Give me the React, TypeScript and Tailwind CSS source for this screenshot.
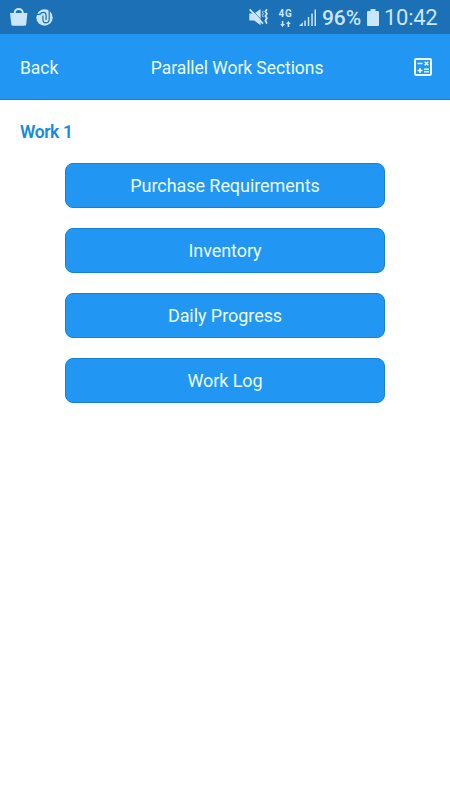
import React from 'react';

const sections = ['Purchase Requirements', 'Inventory', 'Daily Progress', 'Work Log'];

const BagIcon: React.FC = () => (
  <svg className="w-[18px] h-[19px]" viewBox="0 0 18 19" fill="none">
    <path d="M0 5h17.4l-1.2 11.4a1.7 1.7 0 0 1-1.7 1.4H3a1.7 1.7 0 0 1-1.7-1.4z" fill="currentColor" />
    <path d="M4.7 5.6V4.5a4 3.5 0 0 1 8 0v1.1" stroke="currentColor" strokeWidth="2" />
  </svg>
);

const SwirlIcon: React.FC = () => (
  <svg className="w-[17px] h-[17px]" viewBox="0 0 17 17" fill="none">
    <circle cx="8.5" cy="8.5" r="8.2" fill="currentColor" />
    <path d="M1 5.4h3C4.8 4 6 3.4 7.2 3.4c1.8 0 2.9 1.2 2.9 3V11" stroke="#1b70b6" strokeWidth="1.2" />
    <path d="M13.2 1.5V10c0 2.4-1.3 3.8-3.2 3.8S6.9 12.6 6.9 10.700V6.500" stroke="#1b70b6" strokeWidth="1.2" />
  </svg>
);

const MuteVibrateIcon: React.FC = () => (
  <svg className="w-5 h-[18px]" viewBox="0 0 20 18" fill="none">
    <path d="M0.3 5.4h4.9l6.4-4.4v16.2l-6.4-4.7H0.3z" fill="currentColor" />
    <path d="M3.6 2.6 13.6 13.2" stroke="#1b70b6" strokeWidth="0.8" />
    <path d="M0.7 1.4 14 15.6" stroke="currentColor" strokeWidth="1.8" />
    <path d="M14.2 2.8l-.8 1.4 1 1.6-1.1 1.7 1 1.6" stroke="currentColor" strokeWidth="1" />
    <path d="M17.9 1.2l-1.5 2.2 1.5 2.3-1.5 2.3 1.5 2.3-1.5 2.3 1.5 3" stroke="currentColor" strokeWidth="1.8" />
  </svg>
);

const DataArrowsIcon: React.FC = () => (
  <svg className="w-[11px] h-[6px]" viewBox="0 0 11 6" fill="currentColor">
    <path d="M1.8 0h1.6v3H5L2.6 6 .2 3h1.6zM7.6 6h1.6V3h1.6L8.4 0 6 3h1.6z" />
  </svg>
);

const SignalIcon: React.FC = () => (
  <svg className="w-[18px] h-[17px]" viewBox="0 0 18 17" fill="currentColor">
    <path d="M0 17l3.8-3.8V17zM5.3 11.5h1.5V17H5.3zM8.8 8h1.5v9H8.8zM12.3 4.5h1.5V17h-1.5zM15.5 .5H17V17h-1.5z" />
  </svg>
);

const BatteryIcon: React.FC = () => (
  <svg className="w-3 h-[17px]" viewBox="0 0 12 17" fill="currentColor">
    <path d="M3.5 0h5v2H11a1 1 0 0 1 1 1v13a1 1 0 0 1-1 1H1a1 1 0 0 1-1-1V3a1 1 0 0 1 1-1h2.5z" />
  </svg>
);

const CalculatorIcon: React.FC = () => (
  <svg className="w-[18px] h-[18px]" viewBox="0 0 18 18" fill="none" stroke="#f0feff">
    <rect x="1" y="1" width="16" height="16" rx="1.2" strokeWidth="2" />
    <path d="M3.5 5.5h5M3.5 12.5h5M6 10v5M10 11.3h5M10 13.8h5" strokeWidth="1.5" />
    <path d="M10.7 3.7l3.6 3.6M14.3 3.7l-3.6 3.6" strokeWidth="1.5" />
  </svg>
);

const StatusBar: React.FC = () => (
  <div className="flex h-[34px] items-center bg-[#1b70b6] pl-[10px] pr-[11px] text-[#c9e6fb]">
    <BagIcon />
    <div className="ml-2"><SwirlIcon /></div>
    <div className="ml-auto"><MuteVibrateIcon /></div>
    <div className="ml-[9px] flex w-[15px] flex-col items-center gap-[3px] pt-px">
      <span className="text-[10px] font-bold leading-[9px] tracking-[0.8px]">4G</span>
      <DataArrowsIcon />
    </div>
    <div className="ml-[6px]"><SignalIcon /></div>
    <span className="ml-[5px] w-[41px] whitespace-nowrap pt-px text-[21px] font-medium leading-6 tracking-[-0.1px]">96%</span>
    <div className="ml-1"><BatteryIcon /></div>
    <span className="ml-[5px] w-[55px] whitespace-nowrap pt-[2px] text-[22px] leading-6 tracking-[-0.3px]">10:42</span>
  </div>
);

const App: React.FC = () => {
  return (
    <div className="min-h-screen bg-white font-['Roboto',sans-serif]">
      <StatusBar />

      <header className="flex h-[66px] items-center justify-between border-b border-[#127fd0] bg-[#2196f3] pl-5 pr-[18px] text-[17.5px] tracking-[-0.06px] text-[#e8fdff]">
        <button className="pt-[3px]">Back</button>
        <h1 className="pl-[2px] pt-[3px]">Parallel Work Sections</h1>
        <button aria-label="Calculator">
          <CalculatorIcon />
        </button>
      </header>

      <main>
        <h2 className="ml-5 pt-5 text-[17.5px] font-semibold leading-6 tracking-[-0.4px] text-[#168bdb]">Work 1</h2>
        <div className="mx-auto mt-[19px] flex w-80 flex-col gap-5">
          {sections.map((name) => (
            <button
              key={name}
              className="h-[45px] rounded-lg border border-[#1583d2] bg-[#2196f3] text-lg tracking-[-0.06px] text-[#e8fdff]"
            >
              {name}
            </button>
          ))}
        </div>
      </main>
    </div>
  );
};

export default App;
